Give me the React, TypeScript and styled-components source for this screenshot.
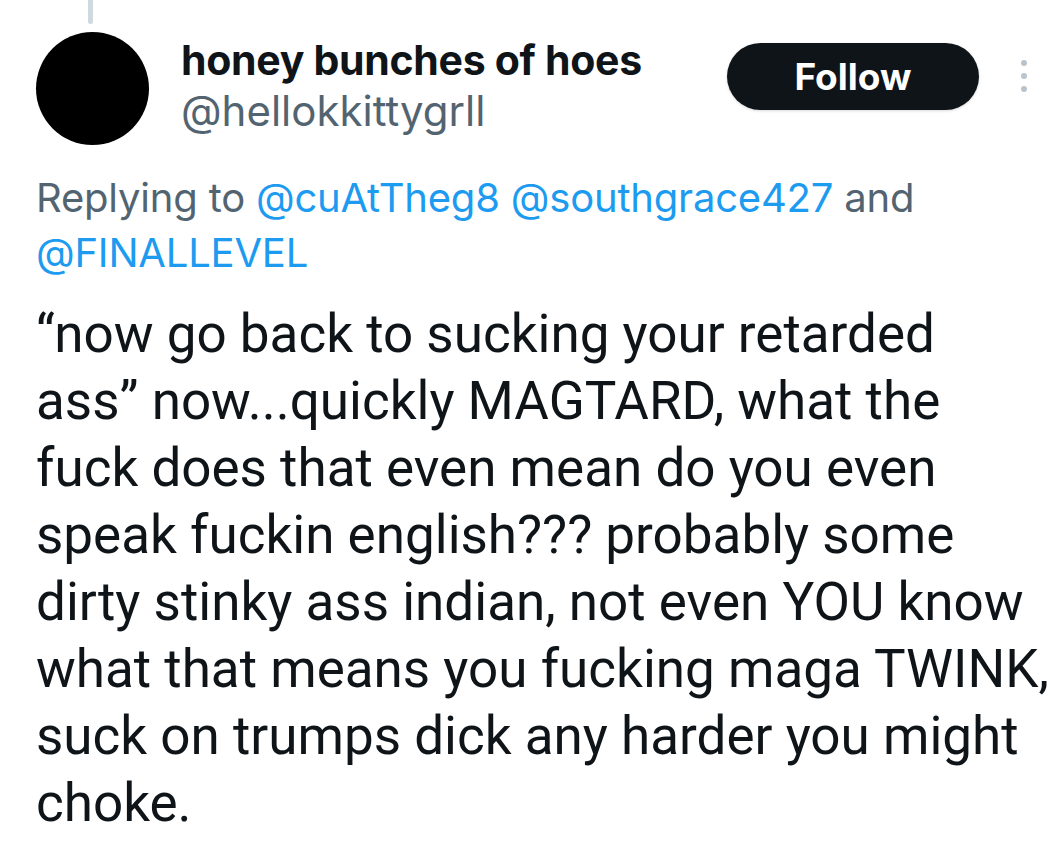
import React from "react";
import styled, { createGlobalStyle } from "styled-components";

const GlobalStyle = createGlobalStyle`
  html, body { margin: 0; padding: 0; background: #ffffff; }
  body { font-family: Inter, "Noto Sans", sans-serif; -webkit-font-smoothing: antialiased; }
`;

const Page = styled.div`
  width: 1053px;
  height: 852px;
  box-sizing: border-box;
  padding: 0 0 0 36px;
  overflow: hidden;
`;

const ThreadLine = styled.div`
  width: 5px;
  height: 24px;
  margin-left: 52px;
  background: #cfd9de;
  border-radius: 0 0 3px 3px;
`;

const Header = styled.div`
  display: flex;
  align-items: flex-start;
  margin-top: 8px;
`;

const Avatar = styled.div`
  width: 113px;
  height: 113px;
  border-radius: 50%;
  background: #000;
  flex: none;
`;

const Names = styled.div`
  display: flex;
  flex-direction: column;
  margin-left: 32px;
  margin-top: 4px;
`;

const DisplayName = styled.div`
  font-family: Inter, sans-serif;
  font-weight: 700;
  font-size: 41px;
  line-height: 48px;
  color: #0f1419;
  letter-spacing: -0.3px;
`;

const Handle = styled.div`
  font-family: Inter, sans-serif;
  font-weight: 400;
  font-size: 42px;
  line-height: 48px;
  margin-top: 3px;
  color: #536471;
`;

const FollowButton = styled.button`
  margin-left: auto;
  margin-top: 11px;
  width: 252px;
  height: 67px;
  border: none;
  border-radius: 34px;
  background: #0f1419;
  color: #ffffff;
  font-family: Inter, sans-serif;
  font-weight: 700;
  font-size: 37px;
  box-shadow: 0 1px 3px rgba(0,0,0,0.15);
  padding: 0;
`;

const MoreDots = styled.div`
  display: flex;
  flex-direction: column;
  gap: 7px;
  margin: 28px 26px 0 42px;
`;

const Dot = styled.span`
  width: 6px;
  height: 6px;
  border-radius: 50%;
  background: #b9c4cc;
`;

const Replying = styled.div`
  margin-top: 25px;
  font-family: Inter, sans-serif;
  font-size: 40px;
  line-height: 55px;
  color: #536471;
  letter-spacing: -0.2px;
`;

const Mention = styled.span`
  color: #1d9bf0;
`;

const Body = styled.div`
  margin-top: 21px;
  font-family: Roboto, sans-serif;
  font-size: 53px;
  line-height: 67px;
  color: #0f1419;
`;

const Line = styled.div`
  white-space: nowrap;
`;

const lines = [
  "\u201Cnow go back to sucking your retarded",
  "ass\u201D now...quickly MAGTARD, what the",
  "fuck does that even mean do you even",
  "speak fuckin english??? probably some",
  "dirty stinky ass indian, not even YOU know",
  "what that means you fucking maga TWINK,",
  "suck on trumps dick any harder you might",
  "choke.",
];

export default function App() {
  return (
    <>
      <GlobalStyle />
      <Page>
        <ThreadLine />
        <Header>
          <Avatar />
          <Names>
            <DisplayName>honey bunches of hoes</DisplayName>
            <Handle>@hellokkittygrll</Handle>
          </Names>
          <FollowButton>Follow</FollowButton>
          <MoreDots>
            <Dot />
            <Dot />
            <Dot />
          </MoreDots>
        </Header>
        <Replying>
          Replying to <Mention>@cuAtTheg8</Mention> <Mention>@southgrace427</Mention> and
          <br />
          <Mention>@FINALLEVEL</Mention>
        </Replying>
        <Body>
          {lines.map((l, i) => (
            <Line key={i}>{l}</Line>
          ))}
        </Body>
      </Page>
    </>
  );
}
